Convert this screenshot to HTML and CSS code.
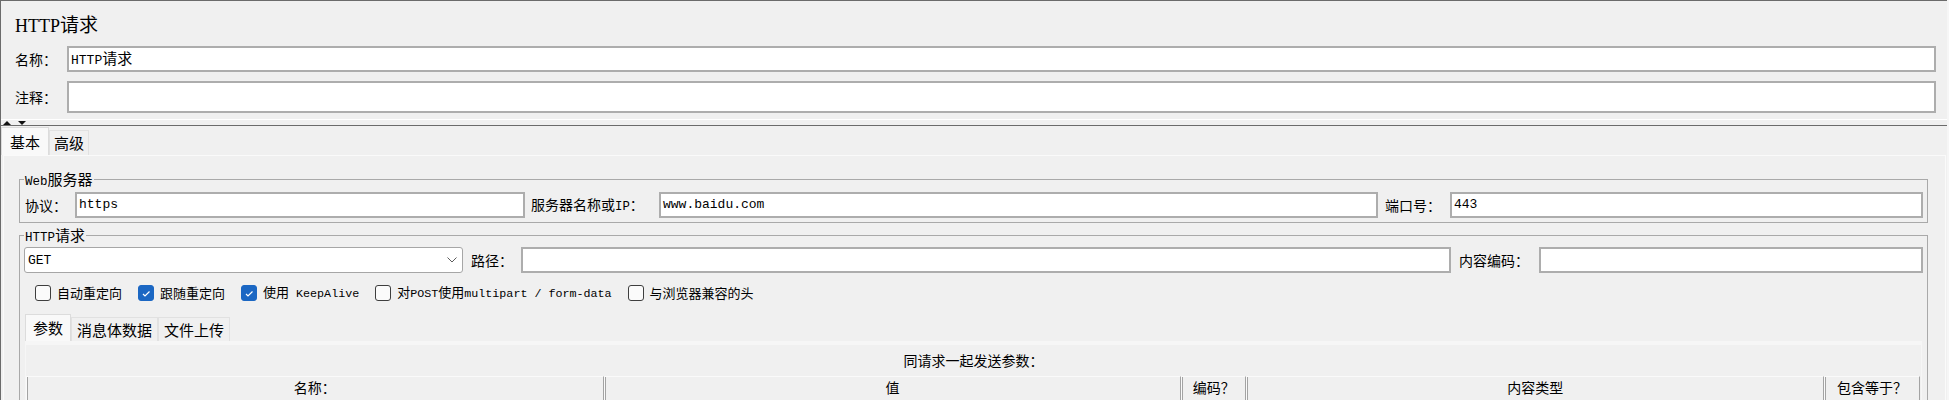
FILE: index.html
```html
<!DOCTYPE html>
<html lang="zh-CN">
<head>
<meta charset="utf-8">
<title>HTTP请求</title>
<link rel="stylesheet" href="styles.css">
</head>
<body>
<div class="frame">
  <div class="head">
    <div class="title"><span class="title-lat">HTTP</span>请求</div>
    <div class="form-row row-name">
      <label class="lbl lbl-head">名称：</label>
      <div class="field"><span class="val"><span class="v-lat">HTTP</span><span class="v-cjk">请求</span></span></div>
    </div>
    <div class="form-row row-comment">
      <label class="lbl lbl-head">注释：</label>
      <div class="field"></div>
    </div>
  </div>

  <div class="splitter"><span class="arrow-up"></span><span class="arrow-down"></span></div>

  <div class="tabs tabs-main">
    <div class="tab tab-sel">基本</div>
    <div class="tab">高级</div>
  </div>

  <div class="panel">
    <fieldset class="group group-web">
      <legend><span class="m">Web</span>服务器</legend>
      <div class="form-row row-field">
        <label class="lbl lbl-proto">协议：</label>
        <div class="field f-proto"><span class="val v-lat">https</span></div>
        <label class="lbl lbl-server">服务器名称或<span class="m">IP</span>：</label>
        <div class="field f-server"><span class="val v-lat">www.baidu.com</span></div>
        <label class="lbl lbl-port">端口号：</label>
        <div class="field f-port"><span class="val v-lat">443</span></div>
      </div>
    </fieldset>

    <fieldset class="group group-http">
      <legend><span class="m">HTTP</span>请求</legend>
      <div class="form-row row-field">
        <div class="select">
          <span class="v-lat">GET</span>
          <svg class="chev" width="10" height="6" viewBox="0 0 10 6"><polyline points="0.5,0.5 5,5 9.5,0.5" fill="none" stroke="#5c5c5c" stroke-width="1"/></svg>
        </div>
        <label class="lbl lbl-path">路径：</label>
        <div class="field f-path"></div>
        <label class="lbl lbl-enc">内容编码：</label>
        <div class="field f-enc"></div>
      </div>

      <div class="checks">
        <label class="cb"><span class="box"></span><span class="cb-text">自动重定向</span></label>
        <label class="cb"><span class="box box-on"><svg width="14" height="14" viewBox="0 0 14 14"><polyline points="4,8 6,10 10.5,5.5" fill="none" stroke="#fff" stroke-width="1.2"/></svg></span><span class="cb-text">跟随重定向</span></label>
        <label class="cb"><span class="box box-on"><svg width="14" height="14" viewBox="0 0 14 14"><polyline points="4,8 6,10 10.5,5.5" fill="none" stroke="#fff" stroke-width="1.2"/></svg></span><span class="cb-text">使用<span class="m"> KeepAlive</span></span></label>
        <label class="cb"><span class="box"></span><span class="cb-text">对<span class="m">POST</span>使用<span class="m">multipart / form-data</span></span></label>
        <label class="cb"><span class="box"></span><span class="cb-text">与浏览器兼容的头</span></label>
      </div>

      <div class="tabs tabs-sub">
        <div class="tab tab-sel">参数</div>
        <div class="tab">消息体数据</div>
        <div class="tab">文件上传</div>
      </div>

      <div class="subpanel">
        <div class="caption">同请求一起发送参数：</div>
        <div class="thead">
          <div class="th">名称：</div>
          <div class="th">值</div>
          <div class="th">编码？</div>
          <div class="th">内容类型</div>
          <div class="th">包含等于？</div>
        </div>
      </div>
    </fieldset>
  </div>
</div>
</body>
</html>
```

FILE: styles.css
```css
* { box-sizing: border-box; }

html, body { margin: 0; padding: 0; }

body {
  width: 1949px;
  height: 400px;
  overflow: hidden;
  background: #f6f6f6;
  font-family: "Noto Sans CJK SC", "Liberation Sans", sans-serif;
  font-size: 14px;
  color: #000;
}

.frame {
  width: 1947px;
  height: 400px;
  background: #f0f0f0;
  border-top: 1px solid #6b6b6b;
  border-left: 1px solid #6b6b6b;
  display: flex;
  flex-direction: column;
}

.frame > * { flex: none; }

/* ---------- header ---------- */
.head { padding: 0 11px 0 14px; }

.title {
  height: 45px;
  padding-top: 9px;
  font-size: 19px;
  line-height: 28px;
  white-space: nowrap;
}

.title-lat {
  font-family: "Liberation Serif", serif;
  font-size: 18px;
}

.form-row {
  display: flex;
  align-items: center;
}

.row-name { height: 26px; }
.row-comment { height: 32px; margin-top: 9px; }

.row-name .field,
.row-comment .field { flex: 1; height: 100%; }

.lbl {
  flex: none;
  font-size: 14px;
  line-height: 18px;
  white-space: nowrap;
}

.lbl-head { width: 52px; }

.m {
  font-family: "Liberation Mono", monospace;
  font-size: 12.3px;
}

.field {
  flex: none;
  height: 26px;
  background: #fff;
  border: 2px solid #adadad;
  display: flex;
  align-items: center;
  padding-left: 2px;
  white-space: nowrap;
  overflow: hidden;
}

.val { line-height: 18px; }

.v-lat {
  font-family: "Liberation Mono", monospace;
  font-size: 13px;
}

.v-cjk { font-size: 15px; }

/* ---------- splitter ---------- */
.splitter {
  height: 13px;
  border-bottom: 1px solid #6b6b6b;
  background: linear-gradient(to bottom, transparent 6px, #ffffff 6px, #ffffff 7px, transparent 7px);
  display: flex;
  align-items: flex-end;
  gap: 7px;
  padding-left: 2px;
}

.arrow-up, .arrow-down {
  width: 0;
  height: 0;
  border-left: 4px solid transparent;
  border-right: 4px solid transparent;
}

.arrow-up { border-bottom: 4px solid #111; }
.arrow-down { border-top: 4px solid #111; }

/* ---------- tabs ---------- */
.tabs {
  display: flex;
  align-items: flex-end;
}

.tab {
  font-size: 15px;
  line-height: 20px;
  border: 1px solid #e1e1e1;
  border-bottom: none;
  display: flex;
  align-items: center;
  justify-content: center;
  white-space: nowrap;
  background: #f0f0f0;
}

.tab-sel { background: #f9f9f9; border-color: #dcdcdc; }

.tabs-main { height: 29px; }
.tabs-main .tab { height: 25px; padding: 0 4px; }
.tabs-main .tab-sel { height: 28px; padding: 0 8px; }

.tabs-sub { height: 27px; margin: 13px 0 0 1px; }
.tabs-sub .tab { height: 24px; padding: 0 5px; }
.tabs-sub .tab-sel { height: 27px; padding: 0 7px; }

/* ---------- main panel ---------- */
.panel {
  flex: 1;
  margin: 0 1px 0 2px;
  border: 1px solid #fafafa;
  border-bottom: none;
  background: #f0f0f0;
  overflow: hidden;
}

.group {
  margin: 0 17px 0 15px;
  padding: 5px 4px 4px 4px;
  border: 1px solid #a9a9a9;
  min-width: 0;
}

.group legend {
  height: 16px;
  padding: 0 1px;
  font-size: 15px;
  line-height: 16px;
  white-space: nowrap;
  overflow: visible;
}

.group legend .m { font-size: 12.5px; line-height: 16px; }

.group-web { margin-top: 15px; }
.group-http { margin-top: 4px; padding-top: 4px; }

.row-field { height: 26px; }

.lbl-proto { width: 51px; padding-left: 1px; }
.f-proto { width: 450px; }
.lbl-server { width: 134px; padding-left: 6px; }
.f-server { width: 719px; }
.lbl-port { width: 72px; padding-left: 7px; }
.f-port { flex: 1; }

.select {
  flex: none;
  width: 439px;
  height: 26px;
  background: #fff;
  border: 1px solid #a6a6a6;
  border-radius: 3px;
  display: flex;
  align-items: center;
  justify-content: space-between;
  padding: 0 5px 0 3px;
}

.chev { display: block; }

.lbl-path { width: 58px; padding-left: 8px; }
.f-path { width: 930px; }
.lbl-enc { width: 88px; padding-left: 8px; }
.f-enc { flex: 1; }

/* ---------- checkboxes ---------- */
.checks {
  display: flex;
  align-items: center;
  gap: 16px;
  height: 16px;
  margin: 12px 0 0 11px;
  font-size: 13px;
  line-height: 16px;
}

.checks .m { font-size: 11.7px; }

.cb {
  display: flex;
  align-items: center;
  gap: 6px;
  white-space: nowrap;
}

.box {
  flex: none;
  width: 16px;
  height: 16px;
  border: 1px solid #3e3e3e;
  border-radius: 3px;
  background: #fbfbfb;
  display: flex;
  align-items: center;
  justify-content: center;
}

.box-on {
  background: #1b67c3;
  border-color: #1b67c3;
}

/* ---------- params panel ---------- */
.subpanel {
  margin: 0 1px;
  border-top: 4px solid #f6f6f6;
  border-left: 1px solid #f6f6f6;
  border-right: 1px solid #f6f6f6;
  background: #f0f0f0;
}

.caption {
  height: 31px;
  line-height: 31px;
  text-align: center;
  font-size: 14px;
}

.thead {
  display: grid;
  grid-template-columns: 1fr 1fr 65px 1fr 96px;
  margin-right: 1px;
  height: 24px;
}

.th {
  border-top: 1px solid #fafafa;
  border-left: 1px solid #fafafa;
  border-right: 1px solid #a3a3a3;
  box-shadow: inset 1px 0 0 #a3a3a3;
  text-align: center;
  font-size: 14px;
  line-height: 21px;
  white-space: nowrap;
}
```
